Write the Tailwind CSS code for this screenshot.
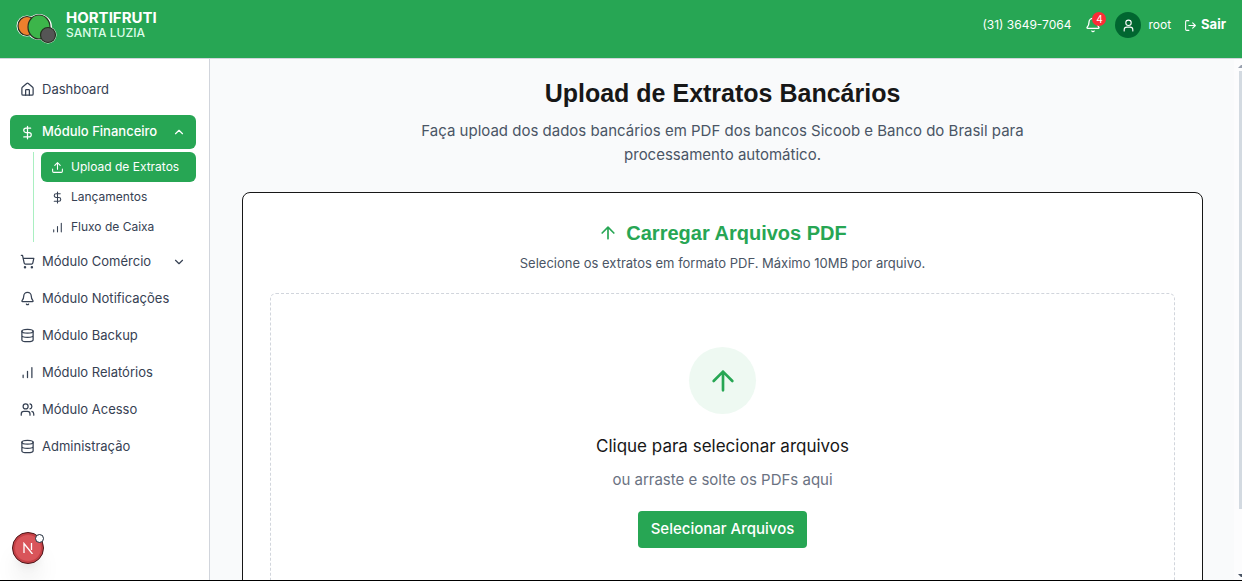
<!DOCTYPE html>
<html lang="pt-BR">
<head>
    <meta charset="UTF-8">
    <meta name="viewport" content="width=device-width, initial-scale=1.0">
    <title>Upload de Extratos - Hortifruti Santa Luzia</title>
    <script src="https://cdn.jsdelivr.net/npm/@tailwindcss/browser@4"></script>
</head>
<body class="flex h-screen flex-col overflow-hidden border-b border-black bg-white font-['Inter',sans-serif] text-gray-700">

<!-- Shared icons -->
<svg class="hidden" aria-hidden="true">
    <symbol id="icon-dollar" viewBox="0 0 24 24">
        <path d="M12 2v20M17 5H9.5a3.5 3.5 0 0 0 0 7h5a3.5 3.5 0 0 1 0 7H6"/>
    </symbol>
    <symbol id="icon-bell" viewBox="0 0 24 24">
        <path d="M10.268 21a2 2 0 0 0 3.464 0"/>
        <path d="M3.262 15.326A1 1 0 0 0 4 17h16a1 1 0 0 0 .74-1.673C19.41 13.956 18 12.499 18 8A6 6 0 0 0 6 8c0 4.499-1.411 5.956-2.738 7.326"/>
    </symbol>
    <symbol id="icon-database" viewBox="0 0 24 24">
        <ellipse cx="12" cy="5" rx="9" ry="3"/>
        <path d="M3 5v14a9 3 0 0 0 18 0V5M3 12a9 3 0 0 0 18 0"/>
    </symbol>
    <symbol id="icon-chart" viewBox="0 0 24 24">
        <path d="M5 20v-4M12 20V10M19 20V4"/>
    </symbol>
    <symbol id="icon-arrow-up" viewBox="0 0 24 24">
        <path d="m5 12 7-7 7 7M12 19V5"/>
    </symbol>
</svg>

<!-- Header -->
<header class="flex h-[59px] shrink-0 items-center justify-between border-b border-gray-300 bg-[#27a654] px-4 text-white">
    <a href="/" class="flex items-center gap-2">
        <svg class="h-9 w-[42px]" viewBox="0 0 42 36">
            <g fill="#fff" stroke="#fff" stroke-width="3">
                <circle cx="11" cy="15" r="9"/>
                <circle cx="23" cy="16" r="11.5"/>
                <circle cx="32" cy="24" r="7"/>
            </g>
            <g stroke="#24301f" stroke-width="1.2">
                <ellipse cx="11" cy="15" rx="9" ry="9.500" fill="#ee7f2d"/>
                <ellipse cx="23" cy="16" rx="11" ry="12" fill="#3cb54a"/>
                <circle cx="32" cy="24" r="7.5" fill="#555"/>
            </g>
        </svg>
        <span class="flex flex-col pb-2">
            <span class="text-[15px] leading-4 font-bold">HORTIFRUTI</span>
            <span class="text-[12px] leading-[14px] font-medium text-green-100">SANTA LUZIA</span>
        </span>
    </a>
    <div class="flex items-center gap-[13px] pb-2 text-[12px]">
        <span>(31) 3649-7064</span>
        <button type="button" aria-label="Notificações" class="relative p-px">
            <svg class="size-4 fill-none stroke-current stroke-2" stroke-linecap="round" stroke-linejoin="round"><use href="#icon-bell"/></svg>
            <span class="absolute -top-1 left-2 flex size-[14px] items-center justify-center rounded-full bg-[#fb2c36] text-[10px]">4</span>
        </button>
        <span class="flex items-center gap-[7px]">
            <span class="flex size-[26px] items-center justify-center rounded-full bg-[#016630]">
                <svg class="size-[13px] fill-none stroke-current stroke-2" viewBox="0 0 24 24" stroke-linecap="round" stroke-linejoin="round">
                    <circle cx="12" cy="7" r="5"/>
                    <path d="M20 22v-2a5 5 0 0 0-5-5H9a5 5 0 0 0-5 5v2"/>
                </svg>
            </span>
            root
        </span>
        <button type="button" class="flex items-center gap-1 text-[13px] font-bold">
            <svg class="size-[13px] fill-none stroke-current stroke-2" viewBox="0 0 24 24" stroke-linecap="round" stroke-linejoin="round">
                <path d="m16 17 5-5-5-5M21 12H9M9 21H5a2 2 0 0 1-2-2V5a2 2 0 0 1 2-2h4"/>
            </svg>
            Sair
        </button>
    </div>
</header>

<div class="flex min-h-0 flex-1">
    <!-- Sidebar -->
    <aside class="relative w-[210px] shrink-0 border-r border-gray-300 bg-white pt-[13px] pr-[13px] pl-[10px]">
        <nav class="flex flex-col gap-[2px] text-[13px] whitespace-nowrap">
            <a href="/dashboard" class="mb-[6px] flex h-[35px] items-center gap-[7px] px-[10px]">
                <svg class="size-[15px] fill-none stroke-current stroke-2" viewBox="0 0 24 24" stroke-linecap="round" stroke-linejoin="round">
                    <path d="M15 21v-8a1 1 0 0 0-1-1h-4a1 1 0 0 0-1 1v8"/>
                    <path d="M3 10a2 2 0 0 1 .709-1.528l7-5.999a2 2 0 0 1 2.582 0l7 5.999A2 2 0 0 1 21 10v9a2 2 0 0 1-2 2H5a2 2 0 0 1-2-2z"/>
                </svg>
                Dashboard
            </a>

            <div class="flex flex-col gap-[3px]">
                <button type="button" class="flex h-[34px] items-center gap-[7px] rounded-md bg-[#27a654] px-[10px] font-medium text-white">
                    <svg class="size-[15px] fill-none stroke-current stroke-2" stroke-linecap="round" stroke-linejoin="round"><use href="#icon-dollar"/></svg>
                    Módulo Financeiro
                    <svg class="ml-auto size-[14px] fill-none stroke-current stroke-2" viewBox="0 0 24 24" stroke-linecap="round" stroke-linejoin="round"><path d="m18 15-6-6-6 6"/></svg>
                </button>
                <div class="ml-[23px] flex flex-col border-l border-[#a9efc1] pl-[7px] text-[12px]">
                    <a href="/upload" class="flex h-[30px] items-center gap-[7px] rounded-md bg-[#27a654] px-[10px] text-white">
                        <svg class="size-[13px] fill-none stroke-current stroke-2" viewBox="0 0 24 24" stroke-linecap="round" stroke-linejoin="round">
                            <path d="M12 3v12M17 8l-5-5-5 5M21 15v4a2 2 0 0 1-2 2H5a2 2 0 0 1-2-2v-4"/>
                        </svg>
                        Upload de Extratos
                    </a>
                    <a href="/lancamentos" class="flex h-[30px] items-center gap-[7px] px-[10px]">
                        <svg class="size-[13px] fill-none stroke-current stroke-2" stroke-linecap="round" stroke-linejoin="round"><use href="#icon-dollar"/></svg>
                        Lançamentos
                    </a>
                    <a href="/fluxo-de-caixa" class="flex h-[30px] items-center gap-[7px] px-[10px]">
                        <svg class="size-[13px] fill-none stroke-current stroke-2" stroke-linecap="round" stroke-linejoin="round"><use href="#icon-chart"/></svg>
                        Fluxo de Caixa
                    </a>
                </div>
            </div>

            <button type="button" class="flex h-[35px] items-center gap-[7px] px-[10px]">
                <svg class="size-[15px] fill-none stroke-current stroke-2" viewBox="0 0 24 24" stroke-linecap="round" stroke-linejoin="round">
                    <circle cx="8" cy="21" r="1"/>
                    <circle cx="19" cy="21" r="1"/>
                    <path d="M2.05 2.05h2l2.66 12.42a2 2 0 0 0 2 1.58h9.78a2 2 0 0 0 1.95-1.57l1.65-7.43H5.12"/>
                </svg>
                Módulo Comércio
                <svg class="ml-auto size-[14px] fill-none stroke-current stroke-2" viewBox="0 0 24 24" stroke-linecap="round" stroke-linejoin="round"><path d="m6 9 6 6 6-6"/></svg>
            </button>
            <a href="/notificacoes" class="flex h-[35px] items-center gap-[7px] px-[10px]">
                <svg class="size-[15px] fill-none stroke-current stroke-2" stroke-linecap="round" stroke-linejoin="round"><use href="#icon-bell"/></svg>
                Módulo Notificações
            </a>
            <a href="/backup" class="flex h-[35px] items-center gap-[7px] px-[10px]">
                <svg class="size-[15px] fill-none stroke-current stroke-2" stroke-linecap="round" stroke-linejoin="round"><use href="#icon-database"/></svg>
                Módulo Backup
            </a>
            <a href="/relatorios" class="flex h-[35px] items-center gap-[7px] px-[10px]">
                <svg class="size-[15px] fill-none stroke-current stroke-2" stroke-linecap="round" stroke-linejoin="round"><use href="#icon-chart"/></svg>
                Módulo Relatórios
            </a>
            <a href="/acesso" class="flex h-[35px] items-center gap-[7px] px-[10px]">
                <svg class="size-[15px] fill-none stroke-current stroke-2" viewBox="0 0 24 24" stroke-linecap="round" stroke-linejoin="round">
                    <path d="M16 21v-2a4 4 0 0 0-4-4H6a4 4 0 0 0-4 4v2M16 3.128a4 4 0 0 1 0 7.744M22 21v-2a4 4 0 0 0-3-3.87"/>
                    <circle cx="9" cy="7" r="4"/>
                </svg>
                Módulo Acesso
            </a>
            <a href="/administracao" class="flex h-[35px] items-center gap-[7px] px-[10px]">
                <svg class="size-[15px] fill-none stroke-current stroke-2" stroke-linecap="round" stroke-linejoin="round"><use href="#icon-database"/></svg>
                Administração
            </a>
        </nav>

        <!-- Dev tools badge -->
        <button type="button" aria-label="Dev Tools" class="absolute bottom-4 left-3 size-8 rounded-full border border-[#4a1518] bg-[#d9555a] shadow-xl shadow-black/10 inset-ring-2 inset-ring-[#c43f45]">
            <svg class="mx-auto size-3 fill-none stroke-white" viewBox="0 0 12 12" stroke-width="1.3"><path d="M2 11V1.500L10.500 12M9.500 1v7"/></svg>
            <span class="absolute top-px -right-px size-[9px] rounded-full border border-gray-800 bg-white"></span>
        </button>
    </aside>

    <!-- Content -->
    <main class="min-w-0 flex-1 overflow-hidden bg-gray-50 pt-[17px] pr-[31px] pl-8">
        <div class="text-center">
            <h1 class="font-['Liberation_Sans',sans-serif] text-[25px] leading-[34px] font-bold text-neutral-900">Upload de Extratos Bancários</h1>
            <p class="mx-auto mt-[9px] max-w-[640px] text-[15px] leading-6 text-gray-600">Faça upload dos dados bancários em PDF dos bancos Sicoob e Banco do Brasil para processamento automático.</p>
        </div>

        <section class="mt-[25px] rounded-lg border border-neutral-900 bg-white px-[27px] pt-[26px] pb-7">
            <h2 class="flex items-center justify-center gap-2 font-['Liberation_Sans',sans-serif] text-[20px] leading-7 font-bold text-[#27a654]">
                <svg class="size-5 fill-none stroke-current stroke-2" stroke-linecap="round" stroke-linejoin="round"><use href="#icon-arrow-up"/></svg>
                Carregar Arquivos PDF
            </h2>
            <p class="mt-[6px] text-center text-[13px] leading-5 text-gray-600">Selecione os extratos em formato PDF. Máximo 10MB por arquivo.</p>

            <div class="mt-5 flex flex-col items-center rounded-md border border-dashed border-gray-300 px-6 pt-[53px] pb-[53px]">
                <div class="flex size-[67px] items-center justify-center rounded-full bg-[#eef9f2] text-[#27a654]">
                    <svg class="size-8 fill-none stroke-current stroke-2" stroke-linecap="round" stroke-linejoin="round"><use href="#icon-arrow-up"/></svg>
                </div>
                <p class="mt-5 text-[17px] leading-6 text-neutral-900">Clique para selecionar arquivos</p>
                <p class="mt-[10px] text-[15px] leading-6 text-gray-500">ou arraste e solte os PDFs aqui</p>
                <button type="button" class="mt-[19px] h-[37px] rounded-sm bg-[#27a654] px-[13px] text-[15px] font-medium text-white">Selecionar Arquivos</button>
            </div>
        </section>
    </main>

    <!-- Scroll track -->
    <div class="flex w-2 shrink-0 flex-col items-end justify-between overflow-hidden bg-[#fcfcfd]">
        <svg class="mt-1 h-2 w-[5px] shrink-0 fill-gray-400" viewBox="0 0 5 8"><path d="M1 5l3-3h1v3z"/></svg>
        <div class="h-[84%] w-[3px] bg-[#d3dae1]"></div>
        <div class="flex-1"></div>
        <svg class="h-2 w-[5px] shrink-0 fill-gray-600" viewBox="0 0 5 8"><path d="M1 2h4v3H4z"/></svg>
    </div>
</div>
</body>
</html>
